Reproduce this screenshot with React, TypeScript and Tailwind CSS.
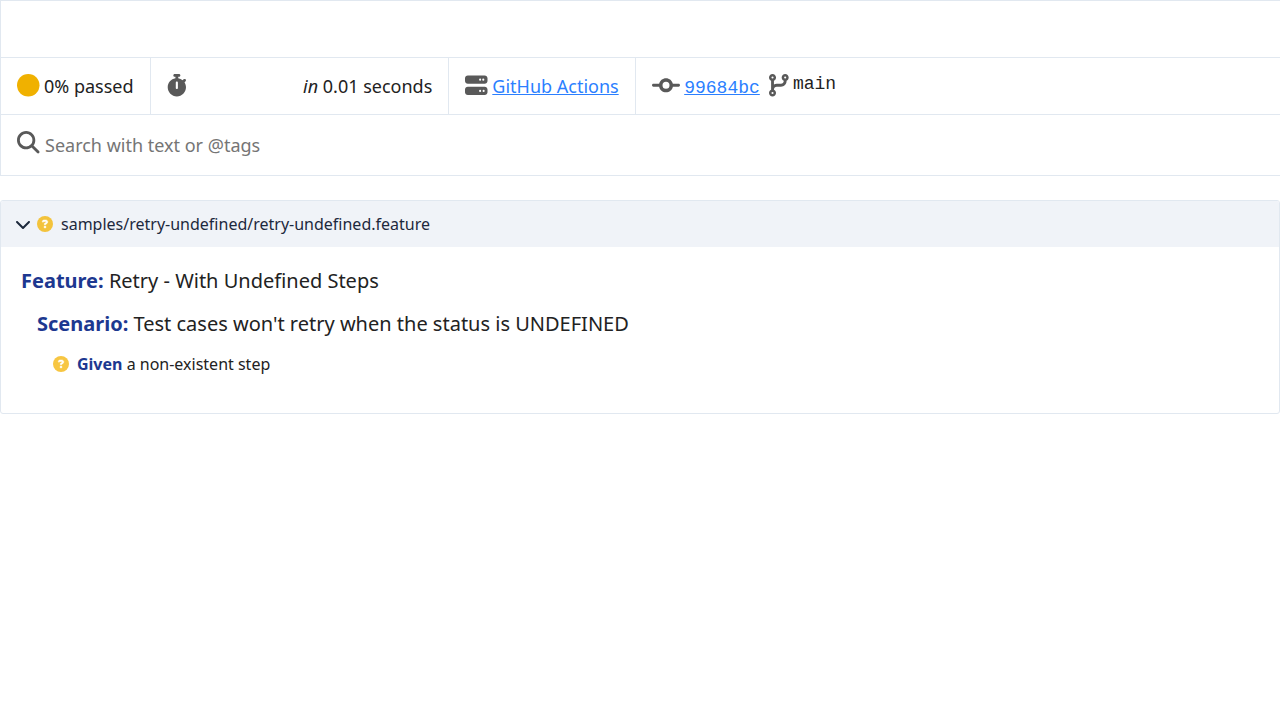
import type { ReactNode } from 'react';
import {
  FaChevronDown,
  FaCircle,
  FaCodeBranch,
  FaCodeCommit,
  FaMagnifyingGlass,
  FaServer,
  FaStopwatch,
} from 'react-icons/fa6';

function UndefinedIcon({ className }: { className: string }) {
  return (
    <svg viewBox="0 0 512 512" className={`mr-2 h-4 w-4 shrink-0 ${className}`} aria-hidden="true">
      <circle cx="256" cy="256" r="256" fill="currentColor" />
      <g fill="white" stroke="white" strokeWidth="16">
        <path d="M169.8 165.3c7.9-22.3 29.1-37.3 52.8-37.3h58.3c34.9 0 63.1 28.3 63.1 63.1c0 22.6-12.1 43.5-31.7 54.8L280 264.4c-.2 13-10.9 23.6-24 23.6c-13.3 0-24-10.7-24-24V250.5c0-8.6 4.6-16.5 12.1-20.8l44.3-25.4c4.7-2.7 7.6-7.7 7.6-13.1c0-8.4-6.8-15.1-15.1-15.1H222.6c-3.4 0-6.4 2.1-7.5 5.3l-.4 1.2c-4.4 12.5-18.2 19-30.6 14.6s-19-18.2-14.6-30.6l.4-1.2z" />
        <circle cx="256" cy="352" r="32" />
      </g>
    </svg>
  );
}

function Cell({ className, children }: { className: string; children?: ReactNode }) {
  return (
    <div className={`flex h-14 shrink-0 items-start whitespace-nowrap pl-4 pt-4 ${className}`}>
      {children}
    </div>
  );
}

function Keyword({ children }: { children: ReactNode }) {
  return <strong className="font-bold text-[#1d3890]">{children}</strong>;
}

function Summary() {
  return (
    <section className="border-y border-l border-[#e1e8f0] text-[18px] leading-[25px]">
      <div className="h-14" />
      <div className="flex border-y border-[#e1e8f0]">
        <Cell className="w-[150px] border-r border-[#e1e8f0]">
          <FaCircle className="mr-[4.5px] h-[22.5px] w-[22.5px] shrink-0 text-[#f0b100]" />
          <span>0% passed</span>
        </Cell>
        <Cell className="w-[298px] border-r border-[#e1e8f0] pr-[15.7px]">
          <FaStopwatch className="h-[22.5px] w-[19.7px] shrink-0 text-[#595959]" />
          <span className="ml-auto">
            <em>in</em> 0.01 seconds
          </span>
        </Cell>
        <Cell className="w-[187px] border-r border-[#e1e8f0]">
          <FaServer className="mr-[4.8px] h-[22.5px] w-[22.5px] shrink-0 text-[#595959]" />
          <a className="text-[#2b7fff] underline" href="#build">
            GitHub Actions
          </a>
        </Cell>
        <Cell className="grow">
          <FaCodeCommit className="mr-[4.2px] h-[22.5px] w-[28px] shrink-0 text-[#595959]" />
          <a
            className="pt-px font-['Liberation_Mono',monospace] leading-[27px] text-[#2b7fff] underline"
            href="#commit"
          >
            99684bc
          </a>
          <FaCodeBranch className="ml-[9.2px] mr-[4.2px] h-[22.5px] w-[19.7px] shrink-0 text-[#595959]" />
          <span className="font-['Liberation_Mono',monospace] leading-[21px]">main</span>
        </Cell>
      </div>
      <div className="flex h-[60px] items-start pl-4 pt-4">
        <FaMagnifyingGlass className="mr-[5.5px] h-[22.5px] w-[22.5px] shrink-0 text-[#595959]" />
        <input
          className="mt-px h-[27px] w-[400px] leading-[27px] outline-none placeholder:text-[#757575]"
          placeholder="Search with text or @tags"
        />
      </div>
    </section>
  );
}

function FeatureDocument() {
  return (
    <section className="mt-6 h-[214px] overflow-hidden rounded-[3px] border border-[#e1e8f0]">
      <button className="flex h-[46px] w-full items-center bg-[#f0f3f8] pl-[14px] text-left text-[#1d293d]">
        <FaChevronDown className="mr-1.5 h-4 w-4 shrink-0" />
        <UndefinedIcon className="text-[#f3c33c]" />
        <span>samples/retry-undefined/retry-undefined.feature</span>
      </button>
      <div className="pl-5 pt-[19px]">
        <h1 className="text-[20px] leading-[30px]">
          <Keyword>Feature:</Keyword> Retry - With Undefined Steps
        </h1>
        <div className="pl-4 pt-[13px]">
          <h2 className="text-[20px] leading-[30px]">
            <Keyword>Scenario:</Keyword> Test cases won't retry when the status is UNDEFINED
          </h2>
          <div className="flex items-center pl-4 pt-[13px]">
            <UndefinedIcon className="text-[#f7c642]" />
            <span>
              <Keyword>Given</Keyword> a non-existent step
            </span>
          </div>
        </div>
      </div>
    </section>
  );
}

export default function App() {
  return (
    <main className="min-h-screen overflow-hidden bg-white font-['Noto_Sans',sans-serif] text-[16px] leading-6 text-[#222222]">
      <Summary />
      <FeatureDocument />
    </main>
  );
}
